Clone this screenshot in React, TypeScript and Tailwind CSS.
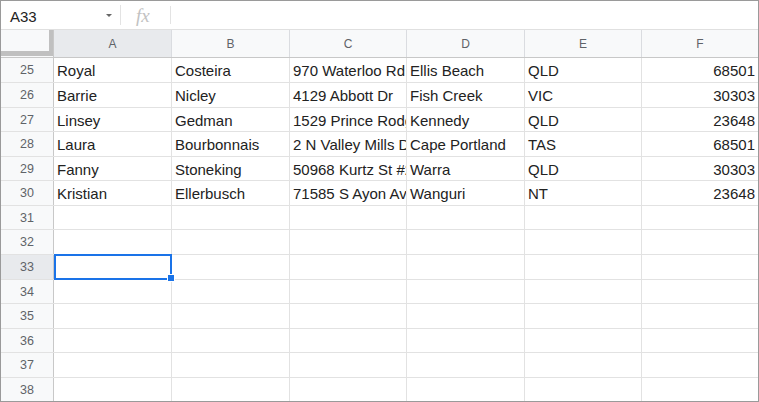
import React from "react";

const rows: { n: number; h: string; cells: string[] }[] = [
  { n: 25, h: "h-[25px]", cells: ["Royal", "Costeira", "970 Waterloo Rd", "Ellis Beach", "QLD", "68501"] },
  { n: 26, h: "h-[25px]", cells: ["Barrie", "Nicley", "4129 Abbott Dr", "Fish Creek", "VIC", "30303"] },
  { n: 27, h: "h-[24px]", cells: ["Linsey", "Gedman", "1529 Prince Rodgers", "Kennedy", "QLD", "23648"] },
  { n: 28, h: "h-[25px]", cells: ["Laura", "Bourbonnais", "2 N Valley Mills Dr", "Cape Portland", "TAS", "68501"] },
  { n: 29, h: "h-[24px]", cells: ["Fanny", "Stoneking", "50968 Kurtz St #212", "Warra", "QLD", "30303"] },
  { n: 30, h: "h-[25px]", cells: ["Kristian", "Ellerbusch", "71585 S Ayon Ave", "Wanguri", "NT", "23648"] },
  { n: 31, h: "h-[24px]", cells: ["", "", "", "", "", ""] },
  { n: 32, h: "h-[25px]", cells: ["", "", "", "", "", ""] },
  { n: 33, h: "h-[25px]", cells: ["", "", "", "", "", ""] },
  { n: 34, h: "h-[24px]", cells: ["", "", "", "", "", ""] },
  { n: 35, h: "h-[25px]", cells: ["", "", "", "", "", ""] },
  { n: 36, h: "h-[24px]", cells: ["", "", "", "", "", ""] },
  { n: 37, h: "h-[25px]", cells: ["", "", "", "", "", ""] },
  { n: 38, h: "h-[23px]", cells: ["", "", "", "", "", ""] },
];

const colW = ["w-[118px]", "w-[118px]", "w-[117px]", "w-[118px]", "w-[117px]", "w-[116px]"];
const letters = ["A", "B", "C", "D", "E", "F"];

export default function App() {
  return (
    <div className="relative w-[759px] h-[402px] border border-[#9a9a9a] bg-white overflow-hidden font-['Liberation_Sans',Arial,sans-serif]">
      {/* formula bar */}
      <div className="h-[29px] border-b border-[#e0e0e0] flex items-center">
        <div className="w-[119px] h-full flex items-center justify-between pl-[9px] pr-[8px] pt-[3px]">
          <span className="text-[15px] text-[#222] leading-none">A33</span>
          <svg width="6" height="3" viewBox="0 0 6 3" className="mb-[2px]">
            <path d="M0 0 L6 0 L3 3 Z" fill="#666" />
          </svg>
        </div>
        <div className="w-px h-[20px] bg-[#e3e3e3]" />
        <span className="ml-[15px] w-[16px] text-[19px] italic text-[#c2c2c2] font-['Liberation_Serif',serif] leading-none">
          fx
        </span>
        <div className="ml-[18px] w-px h-[18px] bg-[#e3e3e3]" />
      </div>

      {/* column header */}
      <div className="flex h-[28px] border-b border-[#c8c8c8]">
        <div className="relative w-[53px] h-full bg-[#f8f9fa] border-r border-[#c8c8c8]">
          <div className="absolute left-0 top-[21px] w-[52px] h-[5px] bg-[#c0c0c0]" />
          <div className="absolute left-[48px] top-0 w-[4px] h-[26px] bg-[#c0c0c0]" />
        </div>
        {letters.map((l, i) => (
          <div
            key={l}
            className={`${colW[i]} h-full flex items-center justify-center pt-[1px] text-[12px] text-[#5f6368] ${
              i === 0 ? "bg-[#e8eaed]" : "bg-[#f8f9fa]"
            } ${i < 5 ? "border-r border-[#dadce0]" : ""}`}
          >
            {l}
          </div>
        ))}
      </div>

      {/* rows */}
      {rows.map((r, ri) => (
        <div key={r.n} className={`flex ${r.h} ${ri < rows.length - 1 ? "border-b border-[#e2e2e2]" : ""}`}>
          <div
            className={`w-[53px] h-full flex items-center justify-center pt-[1px] text-[12.5px] text-[#5f6368] border-r border-[#c8c8c8] ${
              r.n === 33 ? "bg-[#e8eaed]" : "bg-[#f8f9fa]"
            }`}
          >
            {r.n}
          </div>
          {r.cells.map((c, i) => (
            <div
              key={i}
              className={`${colW[i]} h-full flex items-center pt-[3px] overflow-hidden whitespace-nowrap text-[15px] text-[#222] ${
                i === 5 ? "justify-end pr-[3px]" : "pl-[3px]"
              } ${i < 5 ? "border-r border-[#e2e2e2]" : ""}`}
            >
              {c}
            </div>
          ))}
        </div>
      ))}

      {/* selection */}
      <div className="absolute left-[53px] top-[253px] w-[118px] h-[26px] border-2 border-[#1a73e8]" />
      <div className="absolute left-[166px] top-[273px] w-[8px] h-[8px] bg-[#1a73e8] border border-white" />
    </div>
  );
}
